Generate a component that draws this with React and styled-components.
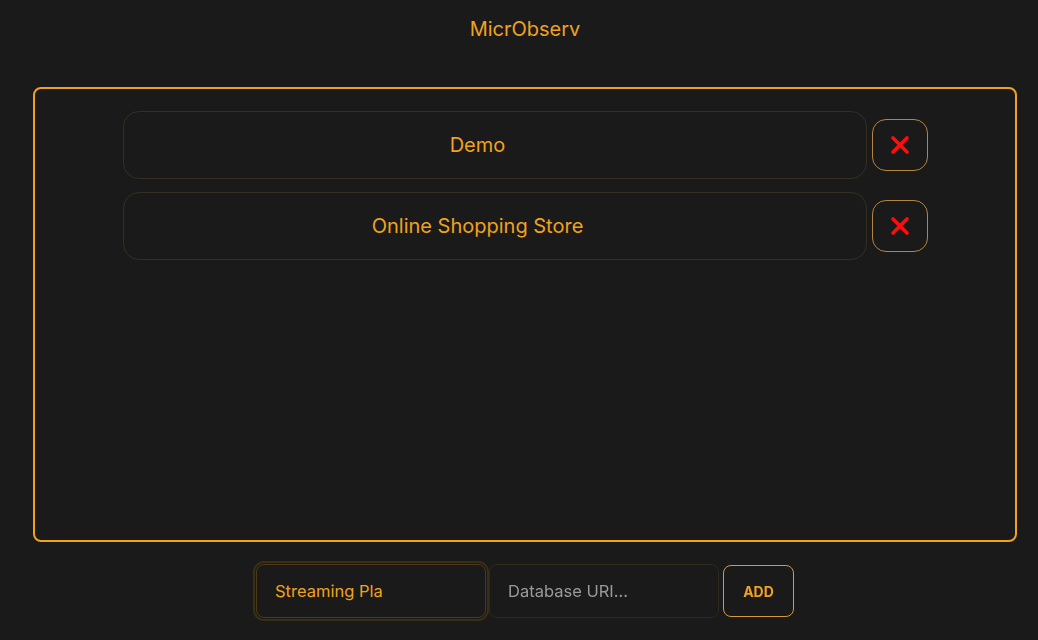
import React, { useState } from 'react';
import styled, { createGlobalStyle } from 'styled-components';

const Global = createGlobalStyle`
    html, body {
        margin: 0;
        background: #1a1a1a;
        font-family: Inter, "Noto Sans", sans-serif;
    }
`;

const Page = styled.div`
    display: flex;
    flex-direction: column;
    align-items: center;
    padding-left: 12px;
    height: 640px;
    box-sizing: border-box;
`;

const Title = styled.h1`
    margin: 17px 0 0;
    font-size: 20px;
    font-weight: 400;
    line-height: 24px;
    color: #f0a21f;
`;

const Panel = styled.div`
    margin-top: 46px;
    width: 984px;
    height: 455px;
    box-sizing: border-box;
    border: 2px solid #f0a21f;
    border-radius: 8px;
    padding-top: 22px;
    display: flex;
    flex-direction: column;
    align-items: center;
    gap: 13px;
`;

const Row = styled.div`
    display: flex;
    align-items: center;
    gap: 5px;
`;

const Item = styled.div`
    width: 744px;
    height: 68px;
    box-sizing: border-box;
    border: 1px solid #33301f;
    border-radius: 16px;
    padding-right: 34px;
    display: flex;
    align-items: center;
    justify-content: center;
    color: #f0a21f;
    font-size: 20px;
`;

const DeleteButton = styled.button`
    width: 56px;
    height: 52px;
    padding: 0;
    background: transparent;
    border: 1px solid #b5853f;
    border-radius: 14px;
    display: flex;
    align-items: center;
    justify-content: center;
    cursor: pointer;
`;

const Form = styled.form`
    margin-top: 22px;
    display: flex;
    align-items: center;
    gap: 3px;
`;

const Input = styled.input`
    width: ${p => p.$w}px;
    height: 54px;
    box-sizing: border-box;
    background: transparent;
    border: 1px solid ${p => (p.$focused ? '#4a3a18' : '#2e2a1c')};
    border-radius: 8px;
    padding: 0 18px;
    color: #f0a21f;
    font-family: inherit;
    font-size: 16.5px;
    outline: ${p => (p.$focused ? '2px solid #3a2e14' : 'none')};
    outline-offset: 1px;
    caret-color: #f0a21f;

    &:focus {
        outline: 2px solid #3a2e14;
    }

    &::placeholder {
        color: #9a9a9a;
    }
`;

const AddButton = styled.button`
    margin-left: 1px;
    width: 71px;
    height: 52px;
    background: transparent;
    border: 1px solid #d69a3a;
    border-radius: 8px;
    color: #f0a21f;
    font-family: inherit;
    font-weight: 700;
    font-size: 14px;
    cursor: pointer;
`;

const Cross = () => (
    <svg width="20" height="20" viewBox="0 0 20 20">
        <path d="M3 3 L17 17 M17 3 L3 17" stroke="#ff0d0d" strokeWidth="3.6" strokeLinecap="round" />
    </svg>
);

export default function App() {
    const [projects, setProjects] = useState(['Demo', 'Online Shopping Store']);
    const [name, setName] = useState('Streaming Pla');
    const [uri, setUri] = useState('');

    return (
        <Page>
            <Global />
            <Title>MicrObserv</Title>
            <Panel>
                {projects.map(p => (
                    <Row key={p}>
                        <Item>{p}</Item>
                        <DeleteButton onClick={() => setProjects(projects.filter(x => x !== p))}>
                            <Cross />
                        </DeleteButton>
                    </Row>
                ))}
            </Panel>
            <Form onSubmit={e => e.preventDefault()}>
                <Input $w={230} $focused autoFocus value={name} onChange={e => setName(e.target.value)} />
                <Input $w={230} placeholder="Database URI..." value={uri} onChange={e => setUri(e.target.value)} />
                <AddButton type="submit">ADD</AddButton>
            </Form>
        </Page>
    );
}
